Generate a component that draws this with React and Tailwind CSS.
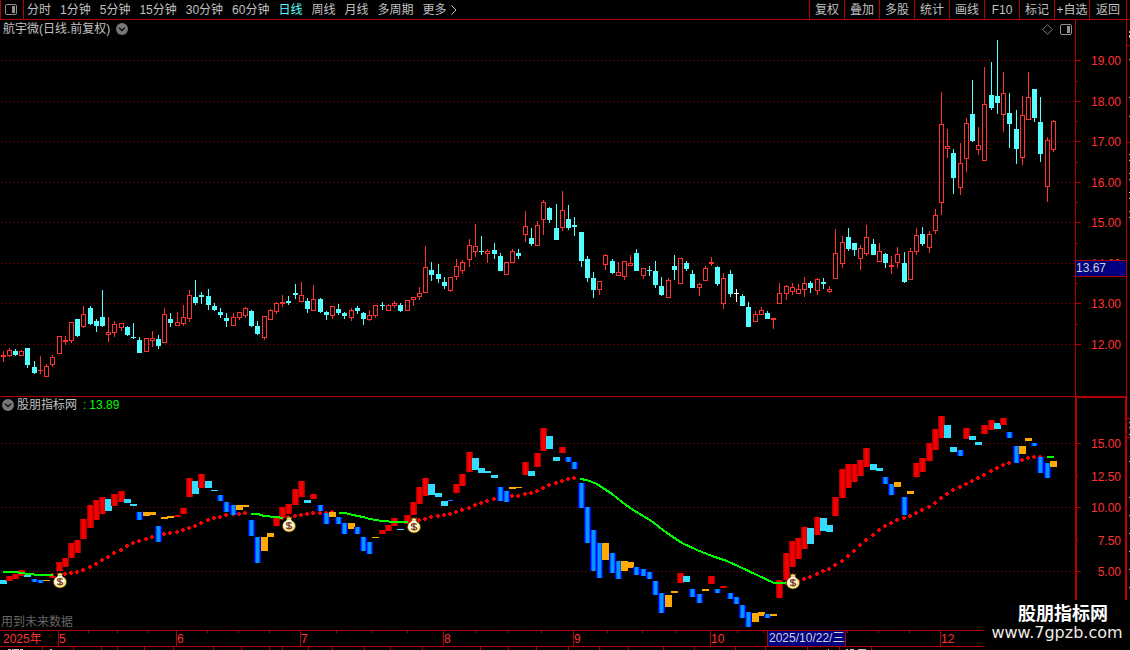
import React from "react";

const FONT = "font-['Liberation_Sans','Noto_Sans_CJK_SC',sans-serif]";

// [high, bodyTop, bodyBottom, low, kind] — r: rising, c: falling, w: unchanged
const CANDLES = [
  [351,355,357,362,"r"],[348,350,356,357,"r"],[349,351,355,356,"c"],[350,351,356,356,"r"],[348,348,365,368,"c"],
  [361,367,373,374,"c"],[356,370,371,374,"r"],[364,366,377,377,"r"],[355,357,365,367,"r"],[336,336,354,354,"r"],
  [336,340,342,345,"r"],[322,322,341,343,"r"],[319,319,336,337,"c"],[306,314,327,328,"r"],[306,308,324,325,"c"],
  [319,321,326,332,"c"],[290,317,326,327,"c"],[317,332,335,342,"r"],[321,324,333,337,"r"],[323,323,328,331,"r"],
  [326,327,335,336,"c"],[323,337,338,339,"c"],[337,340,353,353,"c"],[338,338,352,352,"r"],[331,338,341,347,"r"],
  [335,339,346,349,"c"],[308,314,343,343,"r"],[313,319,323,327,"c"],[312,322,326,326,"r"],[305,317,324,326,"r"],
  [290,295,319,322,"r"],[280,297,303,305,"c"],[292,295,297,304,"c"],[289,296,305,310,"c"],[303,306,310,311,"c"],
  [308,312,315,318,"c"],[313,318,321,327,"c"],[313,317,326,326,"r"],[312,312,318,320,"r"],[307,308,316,318,"r"],
  [310,311,326,327,"c"],[321,326,334,335,"c"],[316,316,338,340,"r"],[309,310,320,320,"r"],[302,303,312,314,"r"],
  [295,302,304,307,"r"],[296,301,303,305,"c"],[284,293,295,299,"c"],[282,295,302,302,"r"],[298,301,309,313,"c"],
  [285,299,311,311,"r"],[298,299,312,313,"c"],[311,312,315,320,"c"],[306,306,316,319,"r"],[304,309,313,315,"c"],
  [312,313,316,319,"c"],[308,310,318,321,"r"],[306,308,311,314,"c"],[312,313,319,325,"c"],[310,315,320,321,"r"],
  [305,305,316,318,"r"],[302,305,306,310,"c"],[304,305,311,311,"r"],[301,303,306,308,"r"],[303,305,311,312,"c"],
  [300,300,311,311,"r"],[297,297,300,306,"r"],[287,293,297,300,"r"],[246,267,293,293,"r"],[262,270,275,281,"c"],
  [264,274,279,283,"c"],[277,282,286,289,"c"],[277,277,291,292,"r"],[259,266,277,280,"r"],[260,262,271,274,"r"],
  [239,245,260,267,"r"],[224,246,252,257,"r"],[236,251,252,255,"c"],[249,251,254,263,"r"],[243,250,254,259,"c"],
  [253,256,271,271,"c"],[262,262,275,275,"r"],[249,251,263,263,"r"],[249,253,256,259,"c"],[211,226,235,242,"r"],
  [228,238,244,246,"c"],[221,225,246,246,"r"],[200,202,220,235,"r"],[207,208,220,223,"c"],[204,228,240,240,"c"],
  [191,210,228,231,"r"],[205,219,228,230,"c"],[217,225,227,236,"c"],[232,232,261,267,"c"],[256,259,278,282,"c"],
  [272,278,290,298,"c"],[281,281,290,295,"r"],[254,255,265,270,"r"],[259,261,273,274,"c"],[262,272,276,276,"r"],
  [261,261,277,280,"r"],[255,263,266,266,"r"],[249,253,271,271,"c"],[268,268,276,279,"r"],[266,270,271,276,"c"],
  [261,271,285,288,"c"],[277,286,295,296,"c"],[278,280,298,298,"r"],[255,266,270,280,"c"],[258,258,284,284,"r"],
  [261,263,269,271,"c"],[270,274,288,288,"c"],[283,284,288,296,"r"],[266,268,281,281,"r"],[257,262,264,266,"r"],
  [266,267,284,286,"c"],[273,278,304,309,"r"],[270,274,294,297,"c"],[289,293,294,302,"w"],[294,296,306,306,"c"],
  [302,307,327,327,"c"],[311,314,322,322,"r"],[307,310,315,315,"r"],[311,313,319,319,"c"],[318,318,320,329,"r"],
  [283,293,304,304,"r"],[285,286,294,300,"r"],[283,287,292,295,"r"],[284,289,294,294,"r"],[277,283,290,297,"r"],
  [281,283,288,293,"c"],[278,279,291,295,"r"],[278,282,284,289,"c"],[286,289,292,293,"r"],[229,253,279,279,"r"],
  [236,242,264,268,"r"],[228,237,249,251,"c"],[243,243,250,256,"c"],[245,248,259,270,"r"],[225,237,254,256,"r"],
  [239,244,255,255,"c"],[243,251,262,262,"r"],[253,254,263,268,"c"],[256,265,267,274,"r"],[247,254,263,268,"r"],
  [252,263,282,283,"c"],[248,251,280,280,"r"],[228,235,252,255,"r"],[227,234,244,246,"c"],[231,234,248,253,"r"],
  [209,215,231,234,"r"],[92,124,203,215,"r"],[129,146,149,158,"r"],[149,153,178,194,"c"],[143,163,188,195,"r"],
  [118,123,159,172,"r"],[80,114,141,142,"c"],[127,145,150,155,"r"],[67,104,161,161,"r"],[62,95,108,110,"c"],
  [40,96,103,114,"c"],[72,93,115,132,"r"],[93,113,124,148,"c"],[110,129,149,164,"c"],[96,115,158,165,"r"],
  [72,97,120,120,"r"],[89,89,118,122,"c"],[97,122,154,162,"c"],[137,140,187,202,"r"],[120,121,150,152,"r"],
];

// [kind, top, bottom] — R: strong rise, C: pullback, B: fall, O: rebound
const BARS = [
  ["C",580,584],["R",576,581],["R",574,579],["R",570,576],["C",575,577],["B",579,582],["B",580,583],["O",580,581],["R",576,578],["R",562,571],
  ["R",558,567],["R",543,558],["R",540,553],["R",519,539],["R",505,528],["R",500,520],["R",497,514],["C",499,511],["R",494,506],["R",491,502],
  ["C",499,503],["C",504,506],["B",512,520],["O",512,516],["O",512,515],["B",526,542],["O",517,519],["O",516,518],["R",515,517],["R",508,514],
  ["R",478,497],["C",481,494],["R",474,488],["C",481,488],["C",490,491],["B",495,501],["B",502,512],["B",505,515],["O",505,510],["O",505,507],
  ["B",520,536],["B",537,563],["O",537,551],["O",533,537],["R",518,526],["R",507,518],["R",504,514],["R",489,505],["R",481,497],["C",500,503],
  ["R",494,499],["B",505,511],["B",513,524],["O",512,517],["B",517,524],["B",523,534],["O",523,529],["B",527,534],["B",537,551],["B",542,554],
  ["O",537,538],["R",530,534],["R",525,531],["R",518,526],["C",529,530],["R",515,524],["R",502,515],["R",487,504],["R",478,496],["C",484,495],
  ["C",493,497],["C",501,506],["B",500,501],["R",484,493],["R",474,486],["R",452,472],["C",458,470],["C",468,473],["C",471,473],["C",475,478],
  ["B",487,501],["B",491,502],["O",487,489],["O",487,488],["R",462,475],["C",471,476],["R",453,467],["R",428,451],["C",436,449],["C",457,461],
  ["R",447,453],["B",457,462],["B",462,469],["B",483,508],["B",507,543],["B",530,571],["B",543,578],["O",543,560],["B",553,573],["B",561,579],
  ["O",561,571],["O",562,568],["B",567,575],["B",569,576],["B",572,579],["B",581,595],["B",593,613],["O",595,607],["O",591,593],["R",573,583],
  ["C",576,582],["B",589,597],["B",594,603],["O",589,591],["R",576,584],["B",589,593],["R",586,588],["B",593,599],["B",597,604],["B",605,618],
  ["B",612,627],["O",613,622],["O",612,616],["B",614,618],["O",614,616],["R",580,598],["R",553,580],["R",541,567],["R",538,559],["R",527,549],
  ["C",528,544],["R",517,535],["C",518,531],["C",525,532],["R",497,516],["R",469,498],["R",464,488],["R",464,482],["R",460,476],["R",448,467],
  ["C",464,470],["C",468,471],["B",477,484],["B",484,495],["O",482,487],["B",497,515],["O",491,494],["R",463,477],["R",458,472],["R",443,461],
  ["R",429,450],["R",416,438],["C",425,438],["C",447,452],["B",450,456],["R",428,439],["C",436,440],["C",442,445],["R",425,434],["R",420,430],
  ["C",423,429],["R",418,425],["B",432,438],["B",446,463],["O",446,454],["O",438,441],["B",443,446],["B",457,473],["B",463,478],["O",461,467],
];

// Rising stretches of the average: first bar index, then one value per bar
const DOT_RUNS = [
  [8, [575,575,574,573,572,570,567,564,560,557,553,550,546,543,541,539,537,536,534,533,532,530,528,526,523,520,518,517,515,514,514,513]],
  [45, [518,517,516,515,514,513,513,513,512]],
  [65, [522,521,520,519,517,516,515,514,512,510,508,505,503,501,499,498,497,496,496,494,493,491,488,485,483,481,479,478]],
  [126, [583,582,581,579,577,574,571,569,565,561,556,551,545,540,535,530,526,523,520,518,516,513,510,507,503,498,494,490,487,484,481,478,475,471,468,465,463,461,460,458,457,457]],
];

// Falling stretches of the average
const GREEN_LINES = [
  "3,572 15,572 22,573 28,574 40,575 53,575",
  "251,514 258,514 264,516 276,517 283,518",
  "339,513 345,513 353,515 363,517 370,519 382,521 395,522 408,522",
  "580,479 587,480 597,484 612,494 622,502 633,510 650,520 667,533 682,543 697,550 712,556 727,561 740,567 757,575 774,583 786,583",
  "1047,457 1054,457",
];

const BAGS = [[60, 581], [289, 525], [414, 526], [793, 582]];

const barX = (i) => Math.floor(3.1 + i * 6.2143);
const CANDLE_COLOR = { r: "#ff3232", c: "#54ffff", w: "#ffffff" };

const PRICE_TICKS = [[60, "19.00"], [101, "18.00"], [141, "17.00"], [182, "16.00"], [222, "15.00"], [263, "14.00"], [303, "13.00"], [344, "12.00"]];
const PRICE_MINOR = [81, 121, 162, 202, 243, 283, 324];
const IND_TICKS = [[443, "15.00", true], [475, "12.50", false], [507, "10.00", true], [539, "7.50", false], [571, "5.00", true]];

const MONTHS = [[58, "5"], [176, "6"], [300, "7"], [443, "8"], [573, "9"], [710, "10"], [940, "12"]];
const DATE_MINOR = [88, 117, 147, 207, 238, 269, 336, 372, 407, 476, 508, 541, 607, 642, 676, 737, 763, 847, 878, 909];
const FOOT_MARKS = [42, 73, 101, 117, 144, 173, 213, 241, 269, 282, 308, 332, 364, 390, 422, 480, 508, 536, 568, 599, 628, 663, 694, 735, 765, 807, 839, 871];
const FOOT_BITS = [[8, 3], [12, 7], [20, 3], [50, 2], [828, 1], [846, 2], [850, 4], [858, 8]];

const EDGE_MARKS = [59, 97, 116, 154, 160, 173, 179, 192, 198, 211, 217];
const EDGE_MARKS_LOW = [422, 427, 434, 461, 497, 515, 533, 551, 569, 587];

const GridLine = ({ y }) => (
  <line x1="1" x2="1075" y1={y + 0.5} y2={y + 0.5} stroke="#a00000" strokeDasharray="1 3" />
);

function Candle({ x, d }) {
  const [h, t, b, l, k] = d;
  const color = CANDLE_COLOR[k];
  const hollow = k === "r" && b - t > 2;
  return (
    <g fill={color}>
      {t > h && <rect x={x} y={h} width="1" height={t - h} />}
      {l > b && <rect x={x} y={b} width="1" height={l - b} />}
      {hollow ? (
        <rect x={x - 1.5} y={t + 0.5} width="4" height={b - t - 1} fill="none" stroke={color} />
      ) : (
        <rect x={x - 2} y={t} width="5" height={b - t} />
      )}
    </g>
  );
}

function Bar({ x, d }) {
  const [k, t, b] = d;
  const h = b - t;
  if (k === "C" || k === "O") {
    return <rect x={x - 3} y={t} width="7" height={h} fill={k === "C" ? "#33ddff" : "#ffaa00"} />;
  }
  const [edge, mid, core] = k === "R" ? ["#aa0000", "#d80000", "#f40000"] : ["#0000f0", "#0050ff", "#0098ff"];
  return (
    <g>
      <rect x={x - 3} y={t} width="7" height={h} fill={edge} />
      <rect x={x - 2} y={t} width="5" height={h} fill={mid} />
      <rect x={x - 1} y={t} width="3" height={h} fill={core} />
    </g>
  );
}

function MoneyBag({ x, y }) {
  return (
    <g transform={`translate(${x} ${y})`}>
      <path d="M-3 -8.5 L-1.2 -7.4 L0 -8.5 L1.2 -7.4 L3 -8.5 L2 -4.5 H-2 Z" fill="#fbe96b" stroke="#4a2010" strokeWidth=".7" />
      <ellipse cx="0" cy="1" rx="6.6" ry="6" fill="#f6e87a" stroke="#5a3010" strokeWidth=".6" />
      <ellipse cx="-.6" cy=".2" rx="5" ry="4.4" fill="#fffbd8" />
      <path d="M-2.4 -4.6 H2.4" stroke="#ffffff" strokeWidth="1.2" />
      <path d="M2.6 -1.4 C1.8 -2.6 -2.6 -2.8 -2.6 -.8 C-2.6 1 2.7 .2 2.7 2.2 C2.7 4.2 -2 4 -2.9 2.6 M0 -3.2 V4.6" fill="none" stroke="#7a3c34" strokeWidth="1.3" />
    </g>
  );
}

function PriceChart() {
  return (
    <svg viewBox="0 20 1130 376" className="block h-auto w-full text-[12px]" shapeRendering="crispEdges" role="img" aria-label="日线 K线图">
      {PRICE_TICKS.map(([y]) => <GridLine key={y} y={y} />)}
      {CANDLES.map((d, i) => <Candle key={i} x={barX(i)} d={d} />)}
      <g fill="#b40000">
        <rect x="1075" y="20" width="1" height="376" />
        <rect x="1126" y="20" width="1" height="376" />
        {PRICE_TICKS.map(([y]) => <rect key={y} x="1076" y={y} width="5" height="1" />)}
        {PRICE_MINOR.map((y) => <rect key={y} x="1076" y={y} width="2" height="1" />)}
        <rect x="1127" y="45" width="3" height="1" />
        <rect x="1127" y="142" width="3" height="1" />
      </g>
      <g fill="#c0c0c0">
        <rect x="1129" y="31" width="1" height="2" />
        <rect x="1129" y="35" width="1" height="3" />
        {EDGE_MARKS.map((y) => <rect key={y} x="1129" y={y} width="1" height="1" />)}
      </g>
      <g fill="#ff3232" textAnchor="end">
        {PRICE_TICKS.map(([y, t]) => <text key={t} x="1121" y={y + 5}>{t}</text>)}
      </g>
      <rect x="1075" y="260" width="52" height="17" fill="#b40000" />
      <rect x="1076" y="261" width="50" height="15" fill="#000080" />
      <text x="1076" y="272" fill="#d0d0d0">13.67</text>
    </svg>
  );
}

function IndicatorChart() {
  return (
    <svg viewBox="0 396 1130 234" className="block h-auto w-full text-[12px]" shapeRendering="crispEdges" role="img" aria-label="股朋指标网 指标图">
      {IND_TICKS.filter((t) => t[2]).map(([y]) => <GridLine key={y} y={y} />)}
      <g fill="#ff0000">
        {DOT_RUNS.flatMap(([start, ys]) =>
          ys.map((y, j) => {
            const x = barX(start + j);
            return <path key={`${start}-${j}`} d={`M${x - 1} ${y - 2}h2v1h1v2h-1v1h-2v-1h-1v-2h1z`} />;
          })
        )}
      </g>
      {BARS.map((d, i) => <Bar key={i} x={barX(i)} d={d} />)}
      {GREEN_LINES.map((p) => <polyline key={p} points={p} fill="none" stroke="#00ff00" strokeWidth="2" />)}
      <g shapeRendering="geometricPrecision">
        {BAGS.map(([x, y]) => <MoneyBag key={x} x={x} y={y} />)}
      </g>
      <g fill="#b40000">
        <rect x="0" y="396" width="1127" height="1" />
        <rect x="1075" y="396" width="52" height="2" />
        <rect x="1075" y="396" width="2" height="234" />
        <rect x="1125" y="396" width="2" height="234" />
        {IND_TICKS.map(([y, , major]) => <rect key={y} x="1077" y={y} width={major ? 4 : 1} height="1" />)}
        <rect x="1127" y="418" width="3" height="1" />
        <rect x="1127" y="437" width="3" height="1" />
      </g>
      <g fill="#c0c0c0">
        {EDGE_MARKS_LOW.map((y) => <rect key={y} x="1129" y={y} width="1" height="1" />)}
      </g>
      <g fill="#ff3232" textAnchor="end">
        {IND_TICKS.map(([y, t, major]) => <text key={t} x="1121" y={major ? y + 5 : y + 6}>{t}</text>)}
      </g>
    </svg>
  );
}

function DateAxis() {
  return (
    <svg viewBox="0 630 1130 20" className="block h-auto w-full text-[12px]" shapeRendering="crispEdges" role="img" aria-label="日期轴">
      <g fill="#b40000">
        <rect x="0" y="630" width="1127" height="1" />
        <rect x="0" y="646" width="1127" height="1" />
        {MONTHS.map(([x]) => <rect key={x} x={x} y="630" width="1" height="16" />)}
        {DATE_MINOR.map((x) => <rect key={x} x={x} y="631" width="1" height="2" />)}
        {FOOT_MARKS.map((x) => <rect key={x} x={x} y="647" width="1" height="3" />)}
      </g>
      <g fill="#c0c0c0">
        {FOOT_BITS.map(([x, w]) => <rect key={x} x={x} y="649" width={w} height="1" />)}
      </g>
      <g fill="#ff3232">
        <text x="3" y="643">2025年</text>
        {MONTHS.map(([x, t]) => <text key={t} x={x + 1} y="643">{t}</text>)}
      </g>
      <rect x="767" y="630" width="79" height="17" fill="#b40000" />
      <rect x="768" y="631" width="77" height="15" fill="#000080" />
      <text x="769" y="642" fill="#d0d0d0">2025/10/22/三</text>
    </svg>
  );
}

const PanelIcon = () => (
  <svg width="12" height="11" viewBox="0 0 12 11" className="block">
    <rect x=".5" y=".5" width="11" height="10" rx="1.5" fill="none" stroke="#909090" />
    <rect x="7" y="2" width="3" height="7" fill="#909090" />
  </svg>
);

const CollapseIcon = () => (
  <svg width="12" height="12" viewBox="0 0 12 12" className="block">
    <circle cx="6" cy="6" r="6" fill="#777777" />
    <path d="M3 4.8 L6 7.6 L9 4.8" fill="none" stroke="#101010" strokeWidth="1.4" />
  </svg>
);

const PERIODS = ["分时", "1分钟", "5分钟", "15分钟", "30分钟", "60分钟", "日线", "周线", "月线", "多周期"];
const TOOLS = ["复权", "叠加", "多股", "统计", "画线", "F10", "标记", "+自选", "返回"];

export default function App() {
  return (
    <div className={`relative w-full overflow-hidden bg-black text-[12px] text-[#c0c0c0] ${FONT}`}>
      <header className="flex h-5 items-stretch border-b border-l border-[#b40000]">
        <button type="button" aria-label="侧栏" className="flex w-[23px] items-center border-r border-[#b40000] pl-1">
          <PanelIcon />
        </button>
        <nav className="flex items-center gap-[9px] pl-[3px] leading-[18px] whitespace-nowrap">
          {PERIODS.map((p) => (
            <button key={p} type="button" className={p === "日线" ? "text-[#54ffff]" : "text-[#c0c0c0]"}>
              {p}
            </button>
          ))}
          <button type="button" className="flex items-center gap-1">
            更多
            <svg width="6" height="10" viewBox="0 0 6 10">
              <path d="M.5 .5 L5 5 L.5 9.5" fill="none" stroke="#c0c0c0" />
            </svg>
          </button>
        </nav>
        <div className="mr-[3px] ml-auto flex border-r border-[#b40000] leading-[18px] whitespace-nowrap">
          {TOOLS.map((t) => (
            <button key={t} type="button" className="flex w-[35px] items-center justify-center border-l border-[#b40000] last:w-[37px]">
              {t}
            </button>
          ))}
        </div>
      </header>

      <section className="relative">
        <PriceChart />
        <div className="absolute inset-x-0 top-0 flex items-center gap-[6px] pl-[3px] leading-[18px]">
          <h1>航宇微(日线.前复权)</h1>
          <button type="button" aria-label="展开主图"><CollapseIcon /></button>
          <div className="mr-[58px] ml-auto flex items-center gap-[7px]">
            <button type="button" aria-label="标记点">
              <svg width="11" height="11" viewBox="0 0 11 11" className="block">
                <path d="M5.5 .7 L10.3 5.5 L5.5 10.3 L.7 5.5 Z" fill="none" stroke="#808080" />
              </svg>
            </button>
            <button type="button" aria-label="面板"><PanelIcon /></button>
          </div>
        </div>
      </section>

      <section className="relative">
        <IndicatorChart />
        <div className="absolute inset-x-0 top-0 flex items-center pl-[2px] leading-[18px]">
          <button type="button" aria-label="展开指标"><CollapseIcon /></button>
          <h2 className="pl-[3px]">股朋指标网</h2>
          <span className="flex gap-[3px] pl-[6px] text-[#00ff00]"><span>:</span><span>13.89</span></span>
        </div>
        <p className="absolute bottom-0 left-px leading-4 text-[#666666]">用到未来数据</p>
      </section>

      <DateAxis />

      <aside className="absolute right-0 bottom-0 flex h-[50px] w-[146px] flex-col items-center bg-black pt-1 text-white">
        <strong className="pl-3 text-[18px] leading-5 font-bold">股朋指标网</strong>
        <a href="#top" className="font-['DejaVu_Sans',sans-serif] text-[16px] leading-[18px] text-[#f0ece8]">www.7gpzb.com</a>
      </aside>
    </div>
  );
}
